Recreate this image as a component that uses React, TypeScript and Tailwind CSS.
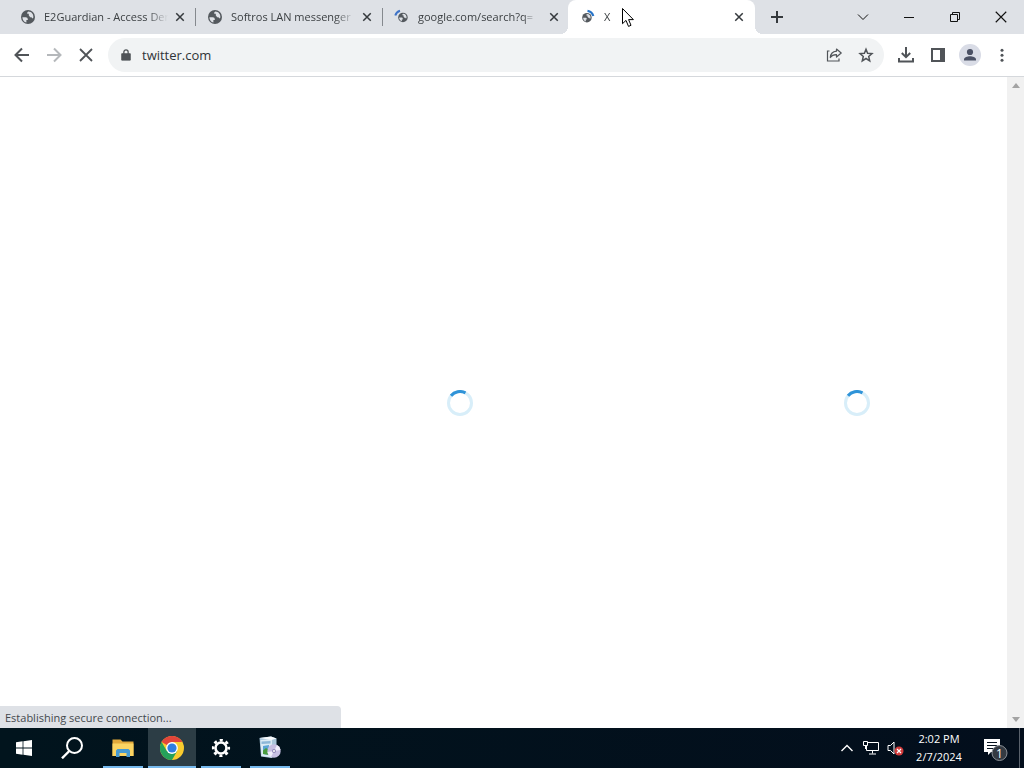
import React from "react";

type TabInfo = { title: string; state: "idle" | "waiting" | "loading"; separator?: boolean };

const tabs: TabInfo[] = [
  { title: "E2Guardian - Access Denied", state: "idle", separator: true },
  { title: "Softros LAN messenger", state: "idle", separator: true },
  { title: "google.com/search?q=", state: "waiting" },
];

function Globe({ state }: { state: TabInfo["state"] }) {
  const globe = (
    <>
      <circle cx="8" cy="8" r="7" fill="#54595e" />
      <path d="M2.4 8.2h3.2c1.5 0 2.2.8 2.2 2v.7H6.4v2.7C4 13 2.400 10.800 2.400 8.200z" fill="#dee1e6" />
      <path d="M8.300 2.500c-1 .5-1.300 1.200-1 2.200h1.500v1.900c.6.300 1 .9 1.200 1.700h1.500l.8 1.200 1-.7C13.900 5.500 11.600 2.500 8.300 2.500z" fill="#dee1e6" />
    </>
  );
  return (
    <svg viewBox="0 0 16 16" className="size-4 shrink-0" aria-hidden="true">
      {state === "idle" && globe}
      {state === "waiting" && (
        <>
          <g transform="translate(3.500 3) scale(.68)">{globe}</g>
          <path d="M1.300 6.500A7 7 0 0 1 6 1.700" fill="none" stroke="#3f74c8" strokeWidth="2" />
        </>
      )}
      {state === "loading" && (
        <>
          <g transform="translate(1.500 3.200) scale(.68)">{globe}</g>
          <path d="M7.500 1.800A7 7 0 0 1 13.300 7" fill="none" stroke="#2874c8" strokeWidth="2.200" />
        </>
      )}
    </svg>
  );
}

function Cross({ className }: { className: string }) {
  return (
    <svg viewBox="0 0 16 16" className={className} fill="none" stroke="currentColor" aria-hidden="true">
      <path d="M2 2l12 12M14 2L2 14" />
    </svg>
  );
}

function Tab({ tab, active = false }: { tab: TabInfo; active?: boolean }) {
  return (
    <div
      className={
        active
          ? "relative -ml-px flex h-full w-[187px] min-w-0 items-center rounded-t-lg bg-white pr-2 pl-3"
          : "relative flex h-full w-[187px] min-w-0 items-center pr-[7px] pl-3"
      }
    >
      {active && (
        <>
          <span className="absolute right-full bottom-0 size-2 bg-[radial-gradient(circle_at_top_left,#dee1e6_8px,white_8px)]" />
          <span className="absolute bottom-0 left-full size-2 bg-[radial-gradient(circle_at_top_right,#dee1e6_8px,white_8px)]" />
        </>
      )}
      <button className="flex min-w-0 flex-1 items-center gap-2 text-left">
        <Globe state={tab.state} />
        <span className="flex-1 overflow-hidden text-[11px] leading-4 whitespace-nowrap text-[#3c4043] [mask-image:linear-gradient(to_right,black_calc(100%-20px),transparent)]">
          {tab.title}
        </span>
      </button>
      <button aria-label={"Close " + tab.title} className="ml-1 flex size-4 items-center justify-center text-[#35393d]">
        <Cross className="size-2.5 stroke-[2.4]" />
      </button>
      {tab.separator && <span className="absolute top-2 -right-px h-[18px] w-px bg-[#85898e]" />}
    </div>
  );
}

function TabStrip() {
  return (
    <header className="flex h-[34px] shrink-0 items-center justify-between bg-[#dee1e6]">
      <nav className="flex h-full min-w-0 items-center pl-2" aria-label="Tabs">
        {tabs.map((tab) => (
          <Tab key={tab.title} tab={tab} />
        ))}
        <Tab tab={{ title: "X", state: "loading" }} active />
        <button aria-label="New tab" className="ml-3 flex size-5 items-center justify-center text-[#35393d]">
          <svg viewBox="0 0 12 12" className="size-3" stroke="currentColor" strokeWidth="2">
            <path d="M6 0v12M0 6h12" />
          </svg>
        </button>
      </nav>
      <div className="flex h-7 text-[#111]">
        <button aria-label="Search tabs" className="flex w-[46px] items-center justify-center">
          <svg viewBox="0 0 12 12" className="size-3" fill="none" stroke="currentColor">
            <path d="M1 3.500l5 5 5-5" />
          </svg>
        </button>
        <button aria-label="Minimize" className="flex w-[46px] items-center justify-center">
          <svg viewBox="0 0 10 10" className="size-2.5" stroke="currentColor">
            <path d="M0 5.500h10" />
          </svg>
        </button>
        <button aria-label="Restore" className="flex w-[46px] items-center justify-center">
          <svg viewBox="0 0 10 10" className="size-2.5" fill="none" stroke="currentColor">
            <path d="M.5 2.500h7v7h-7zM2.500 2.500v-2h7v7h-2" />
          </svg>
        </button>
        <button aria-label="Close window" className="flex w-[46px] items-center justify-center">
          <Cross className="size-3.5 stroke-[1.3]" />
        </button>
      </div>
    </header>
  );
}

function Toolbar() {
  return (
    <div className="flex h-[43px] shrink-0 items-center border-b border-[#d5d8dc] bg-white px-1.5 text-[#505458]">
      <button aria-label="Back" className="flex size-8 items-center justify-center">
        <svg viewBox="0 0 16 16" className="size-4" fill="none" stroke="currentColor" strokeWidth="2">
          <path d="M15 8H2M8 1.500L1.500 8 8 14.500" />
        </svg>
      </button>
      <button aria-label="Forward" className="flex size-8 items-center justify-center text-[#b5b8bb]">
        <svg viewBox="0 0 16 16" className="size-4" fill="none" stroke="currentColor" strokeWidth="2">
          <path d="M1 8h13M8 1.500L14.500 8 8 14.500" />
        </svg>
      </button>
      <button aria-label="Stop" className="flex size-8 items-center justify-center">
        <Cross className="size-4 stroke-[1.8]" />
      </button>
      <div className="ml-1.5 flex h-[34px] min-w-0 flex-1 items-center rounded-full bg-[#f1f3f4] pr-0.5 pl-3">
        <svg viewBox="0 0 12 14" className="h-3 w-3" fill="none" stroke="currentColor" aria-hidden="true">
          <path d="M1 5.500h10V13H1z" fill="currentColor" />
          <path d="M3.500 6V3.500a2.500 2.500 0 0 1 5 0V6" strokeWidth="1.500" />
        </svg>
        <input
          aria-label="Address"
          defaultValue="twitter.com"
          className="ml-2.5 min-w-0 flex-1 bg-transparent pt-0.5 text-[13px] text-[#303438] outline-none"
        />
        <button aria-label="Share" className="flex size-8 items-center justify-center">
          <svg viewBox="0 0 16 16" className="size-4" fill="none" stroke="currentColor" strokeWidth="1.200">
            <path d="M3.500 4H1.500v10h11.500V11.500" />
            <path d="M10.500 2l4.700 4-4.700 4V7.700C7.500 7.600 5.700 8.400 4.300 10.500 4.600 7 6.500 4.600 10.500 4.200z" strokeLinejoin="round" />
          </svg>
        </button>
        <button aria-label="Bookmark" className="flex size-8 items-center justify-center">
          <svg viewBox="0 0 16 16" className="size-4" fill="none" stroke="currentColor" strokeWidth="1.500">
            <path d="M8 2.200l1.600 4 4.400.4-3.300 2.900 1 4.300L8 11.500l-3.700 2.300 1-4.300L2 6.600l4.400-.4z" />
          </svg>
        </button>
      </div>
      <div className="ml-1.5 flex">
        <button aria-label="Downloads" className="flex size-8 items-center justify-center">
          <svg viewBox="0 0 16 16" className="size-4" fill="none" stroke="currentColor" strokeWidth="2">
            <path d="M8 0v10M3.800 6L8 10.200 12.200 6M1 11v3.500h14V11" />
          </svg>
        </button>
        <button aria-label="Side panel" className="flex size-8 items-center justify-center">
          <svg viewBox="0 0 14 14" className="size-3.5" fill="none" stroke="currentColor" strokeWidth="2">
            <path d="M1 1h12v12H1z" />
            <path d="M9 1h4v12H9z" fill="currentColor" stroke="none" />
          </svg>
        </button>
        <button aria-label="Profile" className="flex size-8 items-center justify-center">
          <svg viewBox="0 0 22 22" className="size-[22px]">
            <circle cx="11" cy="11" r="11" fill="#d9dce6" />
            <circle cx="11" cy="8" r="3.100" fill="#4a5064" />
            <path d="M5 16.500v-1.200c0-2 3.500-3.100 6-3.100s6 1.100 6 3.100v1.200z" fill="#4a5064" />
          </svg>
        </button>
        <button aria-label="Menu" className="flex size-8 items-center justify-center">
          <svg viewBox="0 0 16 16" className="size-4" fill="currentColor">
            <circle cx="8" cy="3.300" r="1.500" />
            <circle cx="8" cy="8.300" r="1.500" />
            <circle cx="8" cy="13.300" r="1.500" />
          </svg>
        </button>
      </div>
    </div>
  );
}

function Spinner() {
  return (
    <svg viewBox="0 0 26 26" className="size-[26px]" fill="none" strokeWidth="3" role="img" aria-label="Loading">
      <circle cx="13" cy="13" r="11.500" stroke="#d8eef9" />
      <path d="M4 5.800A11.500 11.500 0 0 1 18.500 2.900" stroke="#2f93d8" />
    </svg>
  );
}

function Page() {
  return (
    <main className="relative flex min-h-0 flex-1 bg-white">
      <div className="grid flex-1 grid-cols-[611fr_396fr]">
        <div className="flex items-center justify-end pr-[138px]">
          <Spinner />
        </div>
        <div className="flex items-center justify-end pr-[137px]">
          <Spinner />
        </div>
      </div>
      <div className="flex w-[17px] flex-col items-center justify-between bg-[#f1f1f1] py-1.5">
        <svg viewBox="0 0 8 5" className="h-[5px] w-2" fill="#a3a3a3">
          <path d="M0 5l4-5 4 5z" />
        </svg>
        <svg viewBox="0 0 8 5" className="h-[5px] w-2" fill="#a3a3a3">
          <path d="M0 0l4 5 4-5z" />
        </svg>
      </div>
      <div className="absolute bottom-0 left-0 flex h-[22px] w-1/3 items-center rounded-tr bg-[#dee1e6] pt-0.5 pl-[5px] text-[11px] leading-4 text-[#44484c]" role="status">
        Establishing secure connection...
      </div>
    </main>
  );
}

function Chrome() {
  return (
    <svg viewBox="0 0 24 24" className="size-6">
      <circle cx="12" cy="12" r="12" fill="#f9cb2e" />
      <path d="M12 12L1.600 6A12 12 0 0 1 22.400 6z" fill="#e2453a" />
      <path d="M1.600 6A12 12 0 0 0 12 24l5.200-9L12 12 6.800 15z" fill="#25a15a" />
      <path d="M12 6h10.400L17.200 15z" fill="#f9cb2e" />
      <circle cx="12" cy="12" r="5.900" fill="white" />
      <circle cx="12" cy="12" r="4.600" fill="#2f7de1" />
    </svg>
  );
}

function Folder() {
  return (
    <svg viewBox="0 0 24 20" className="h-5 w-6">
      <path d="M1.500 1.500h8l2 2h11V18h-21z" fill="#e2a93b" />
      <path d="M1.500 5.500h21V18h-21z" fill="#fbd462" />
      <path d="M5 19v-6.500l1.500-1.500h11l1.500 1.500V19h-3.500v-4h-7v4z" fill="#469ad2" />
    </svg>
  );
}

function Gear() {
  return (
    <svg viewBox="0 0 20 20" className="size-5" fill="none" stroke="white">
      <circle cx="10" cy="10" r="5.500" strokeWidth="2.600" />
      <circle cx="10" cy="10" r="7.800" strokeWidth="2.600" strokeDasharray="3.060 3.066" strokeDashoffset="1.530" />
    </svg>
  );
}

function Installer() {
  return (
    <svg viewBox="0 0 24 24" className="size-6">
      <path d="M1.500 2L13 .5l5.500 2V19l-5 3-10.500-1.500z" fill="#a9c6db" />
      <path d="M2.500 4L14 3v18.500L3.500 20z" fill="#dcebf5" />
      <path d="M1.500 2L13 .5l5.500 2L13.500 4z" fill="#f8fbfd" />
      <path d="M3.500 5.500l9-.5v2.500l-9 .5z" fill="#8db8d8" />
      <path d="M5 10l6-1v10l-6-1z" fill="#5ba5d5" />
      <path d="M5 14.500l3-2.500 3 2v5l-6-1z" fill="#4a9c3f" />
      <circle cx="16" cy="15" r="6.700" fill="#c6bfe3" />
      <path d="M16 15l3-6a6.700 6.700 0 0 1 3.600 5z" fill="#f0eefc" />
      <path d="M16 15l-3 6a6.700 6.700 0 0 1-3.600-5z" fill="#f0eefc" />
      <circle cx="16" cy="15" r="2" fill="#8f87b7" />
      <circle cx="16" cy="15" r="1" fill="white" />
    </svg>
  );
}

function Taskbar() {
  return (
    <footer className="flex h-10 shrink-0 justify-between bg-linear-to-r from-[#01141d] to-[#030e1c] text-white">
      <div className="flex">
        <button aria-label="Start" className="flex w-12 items-center justify-center">
          <svg viewBox="0 0 16 16" className="size-4" fill="white">
            <path d="M0 2.200l6.600-.9v6.300H0zM7.400 1.200L16 0v7.600H7.400zM0 8.400h6.600v6.300L0 13.800zM7.400 8.400H16V16l-8.600-1.200z" />
          </svg>
        </button>
        <button aria-label="Search" className="flex w-12 items-center justify-center">
          <svg viewBox="0 0 22 22" className="size-[22px]" fill="none" stroke="white" strokeWidth="2">
            <circle cx="13.500" cy="8.500" r="7.500" />
            <path d="M8.300 14L1 21.300" strokeWidth="2.400" />
          </svg>
        </button>
        <button aria-label="File Explorer" className="mx-[7px] flex w-10 items-center justify-center border-b-2 border-[#76b9ed] pt-0.5">
          <Folder />
        </button>
        <button aria-label="Google Chrome" className="mr-[5px] -ml-[2px] flex w-12 items-center justify-center border-b-2 border-[#76b9ed] bg-[#2c3d45] pt-0.5">
          <Chrome />
        </button>
        <button aria-label="Settings" className="mr-[9px] flex w-10 items-center justify-center border-b-2 border-[#76b9ed] pt-0.5">
          <Gear />
        </button>
        <button aria-label="Setup" className="flex w-10 items-center justify-center border-b-2 border-[#76b9ed] pt-0.5">
          <Installer />
        </button>
      </div>
      <div className="flex items-center">
        <button aria-label="Show hidden icons" className="flex w-6 justify-center">
          <svg viewBox="0 0 12 8" className="h-2 w-3" fill="none" stroke="white" strokeWidth="1.400">
            <path d="M.5 7L6 1.500 11.500 7" />
          </svg>
        </button>
        <button aria-label="Network" className="flex w-6 justify-center">
          <svg viewBox="0 0 16 14" className="h-3.5 w-4" fill="none" stroke="white">
            <path d="M5 1.500h10.500v8H3.500V5M9.500 9.500v3M6 13h7M.5.500h4v4h-4zM2.500 4.500V8" />
          </svg>
        </button>
        <button aria-label="Volume muted" className="flex w-6 justify-center">
          <svg viewBox="0 0 17 16" className="h-4 w-[17px]" fill="none" stroke="white">
            <path d="M1 5.500h2.500L7 2v12l-3.500-3.500H1z" />
            <circle cx="12" cy="11" r="4.500" fill="#d23b3b" stroke="none" />
            <path d="M10 9l4 4M14 9l-4 4" strokeWidth="1.200" />
          </svg>
        </button>
        <button className="flex w-16 flex-col items-center text-[11px] leading-[18px] whitespace-nowrap">
          <span>2:02 PM</span>
          <span>2/7/2024</span>
        </button>
        <button aria-label="Notifications" className="ml-1 flex w-10 justify-center">
          <svg viewBox="0 0 26 26" className="size-[26px]">
            <path d="M2 4h16v13H9l-3 3v-3H2z" fill="white" />
            <path d="M5 7.500h10M5 10.500h10M5 13.500h7" stroke="#07131f" />
            <circle cx="17.500" cy="18" r="7.500" fill="#343a42" stroke="#8b9097" />
            <text x="17.500" y="22.500" textAnchor="middle" fill="white" fontSize="12">1</text>
          </svg>
        </button>
        <button aria-label="Show desktop" className="ml-1 h-full w-[5px] border-l border-[#59616c]" />
      </div>
    </footer>
  );
}

export default function App() {
  return (
    <div className="relative flex h-screen flex-col overflow-hidden font-['Segoe_UI','Open_Sans','Noto_Sans',sans-serif]">
      <TabStrip />
      <Toolbar />
      <Page />
      <Taskbar />
      <svg viewBox="0 0 13 20" className="absolute top-2 left-[622px] h-5 w-[13px]" fill="white" stroke="black" aria-hidden="true">
        <path d="M.5.500v15.200l3.500-3.300 2.500 6 2.500-1.100-2.400-5.700h4.800z" />
      </svg>
    </div>
  );
}
